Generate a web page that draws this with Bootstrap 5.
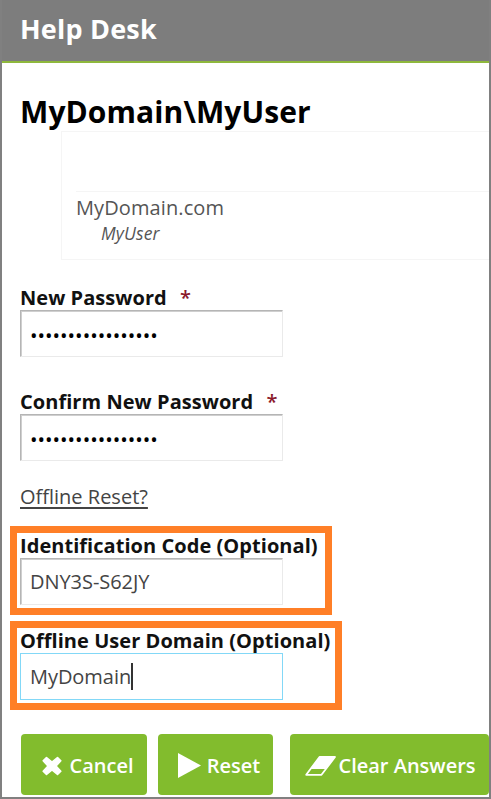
<!DOCTYPE html>
<html lang="en">
<head>
<meta charset="utf-8">
<meta name="viewport" content="width=device-width, initial-scale=1">
<title>Help Desk</title>
<link href="https://cdn.jsdelivr.net/npm/bootstrap@5.3.0/dist/css/bootstrap.min.css" rel="stylesheet">
<style>
body{font-family:"Open Sans","Noto Sans",sans-serif;color:#111;background:#fff;font-size:20px}
.frame{height:799px;border:2px solid #808080;border-top:0}
.topbar{height:63px;background:#7d7d7d;border-bottom:2px solid #8eb83c;padding:0 0 4px 18px}
.topbar h1{font-size:27px;font-weight:700;line-height:1;color:#fff;letter-spacing:.2px}
.user-title{font-size:30px;font-weight:700;line-height:40px;color:#000;height:40px;margin:29px 0 0 18px;letter-spacing:.1px}
.account{height:129px;margin:-1px 0 0 59px;border:1px solid #f5f5f5;border-right:0;padding:59px 0 0 14px}
.account-in{border-top:1px solid #f5f5f5;color:#555}
.dom{font-size:20px;line-height:28px;padding-top:2px;letter-spacing:.1px}
.usr{font-size:17.500px;line-height:22px;padding-left:25px;letter-spacing:.15px}
.pw{padding-left:18px;height:104px}
.pw-first{margin-top:24px}
.lab{display:block;font-size:20px;font-weight:700;line-height:28px;height:26px;white-space:nowrap;letter-spacing:.05px}
.req{color:#8b1a2b;margin-left:8px;font-weight:600}
.field{width:263px;height:47px;border:1px solid #eaeaea;border-top-color:#b5b5b5;border-left-color:#b5b5b5;box-shadow:inset 1px 1px #cfcfcf;border-radius:0;padding:0 9px;font-size:20px;line-height:45px;color:#444;background:#fff;letter-spacing:-.05px}
.dots{color:#000;letter-spacing:0;padding-top:3px}
.field.on{border-color:#83d8f7;box-shadow:none}
.off{color:#444;text-decoration-thickness:2px;text-underline-offset:3px;line-height:28px;height:28px;margin:-9px 0 0 18px;width:max-content}
.hl{border:7px solid #ff7f27;margin-left:8px;padding:0 0 0 3px;height:89px}
.hl .lab{height:25px;line-height:25px}
.hl-code{width:322px;margin-top:15px}
.hl-domain{width:332px;margin-top:6px}
.caret{width:2px;height:27px;background:#333}
.actions{padding-left:19px;margin-top:24px}
.act{height:61px;background:#82bc2d;border:0;border-radius:4px;color:#fff;font-size:20px;font-weight:600;white-space:nowrap;padding:2px 0 0}
.act:hover{background:#76ad26;color:#fff}
.act-cancel{width:126px;gap:7px;padding-left:8px}
.act-reset{width:115px;margin-left:11px;gap:6px;padding-left:7px}
.act-clear{width:199px;margin-left:17px;gap:2px;padding-left:2px}
</style>
</head>
<body>
<div class="frame overflow-hidden">
  <header class="topbar d-flex align-items-center"><h1 class="m-0">Help Desk</h1></header>
  <h2 class="user-title mb-0">MyDomain\MyUser</h2>
  <div class="account"><div class="account-in"><div class="dom">MyDomain.com</div><div class="usr fst-italic">MyUser</div></div></div>
  <form>
    <div class="pw pw-first"><label class="lab" for="p1">New Password <span class="req">*</span></label>
      <input class="form-control field dots" id="p1" value="•••••••••••••••••"></div>
    <div class="pw"><label class="lab" for="p2">Confirm New Password <span class="req">*</span></label>
      <input class="form-control field dots" id="p2" value="•••••••••••••••••"></div>
    <a class="off d-block" href="#">Offline Reset?</a>
    <div class="hl hl-code"><label class="lab" for="c1">Identification Code (Optional)</label>
      <input class="form-control field" id="c1" value="DNY3S-S62JY"></div>
    <div class="hl hl-domain"><span class="lab">Offline User Domain (Optional)</span>
      <div class="field on d-flex align-items-center"><span>MyDomain</span><span class="caret"></span></div></div>
    <div class="actions d-flex">
      <button type="button" class="btn act act-cancel d-flex align-items-center justify-content-center"><svg width="20" height="20" viewBox="0 0 20 20"><path d="M4.500 1.500 10 6 15.500 1.500 18.800 4.800 14 10l4.800 5.200L15.500 18.500 10 14l-5.500 4.500L1.200 15.200 6 10 1.200 4.800Z" fill="#fff" stroke="#fff" stroke-width="1.600" stroke-linejoin="round"/></svg><span>Cancel</span></button>
      <button type="button" class="btn act act-reset d-flex align-items-center justify-content-center"><svg width="23" height="25" viewBox="0 0 23 25"><path d="M0 0 23 12.500 0 25Z" fill="#fff"/></svg><span>Reset</span></button>
      <button type="button" class="btn act act-clear d-flex align-items-center justify-content-center"><svg width="31" height="20" viewBox="0 0 31 20"><path d="M14.500 1H30L16.500 18.800H1.200Z" fill="none" stroke="#fff" stroke-width="1.800" stroke-linejoin="round"/><path d="M14.500 1H30L20.500 13H5Z" fill="#fff"/></svg><span>Clear Answers</span></button>
    </div>
  </form>
</div>
<script src="https://cdn.jsdelivr.net/npm/bootstrap@5.3.0/dist/js/bootstrap.bundle.min.js"></script>
</body>
</html>
